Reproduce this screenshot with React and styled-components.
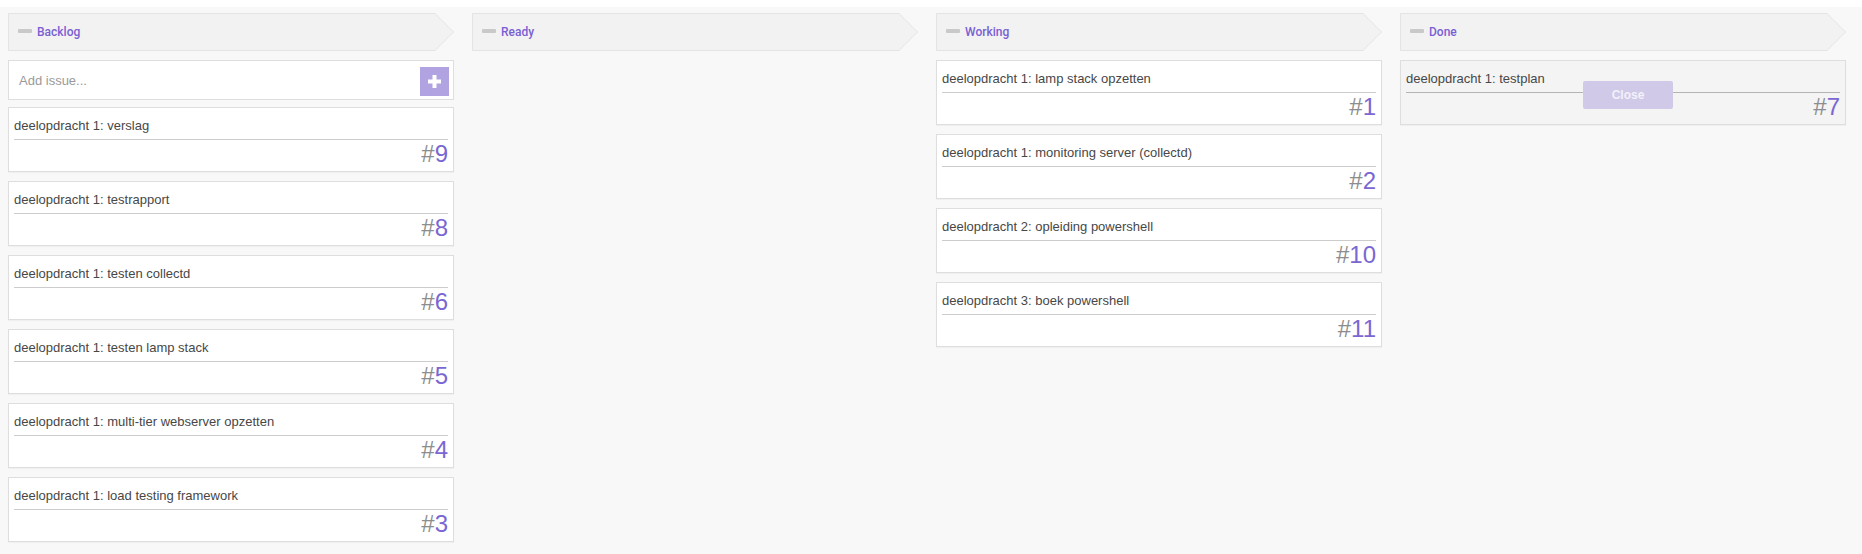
import React from "react";
import styled, { createGlobalStyle } from "styled-components";

const GlobalStyle = createGlobalStyle`
  html, body {
    margin: 0;
    padding: 0;
    background: #ffffff;
    font-family: "Liberation Sans", Arial, sans-serif;
  }
  * {
    box-sizing: border-box;
  }
`;

const Board = styled.div`
  margin-top: 7px;
  min-height: calc(100vh - 7px);
  background: #f8f8f8;
  padding: 6px 16px 12px 8px;
  display: grid;
  grid-template-columns: repeat(4, 1fr);
  column-gap: 18px;
  align-items: start;
`;

const Column = styled.div`
  display: flex;
  flex-direction: column;
`;

const Header = styled.div`
  position: relative;
  height: 38px;
  margin-bottom: 9px;
  display: flex;
  align-items: center;
  padding-left: 10px;

  &::before,
  &::after {
    content: "";
    position: absolute;
    z-index: 0;
  }
  &::before {
    inset: 0;
    background: #e4e4e4;
    clip-path: polygon(0 0, calc(100% - 19px) 0, 100% 50%, calc(100% - 19px) 100%, 0 100%);
  }
  &::after {
    inset: 1px 1px 1px 1px;
    background: #f2f2f2;
    clip-path: polygon(0 0, calc(100% - 18px) 0, 100% 50%, calc(100% - 18px) 100%, 0 100%);
  }
`;

const Dash = styled.span`
  position: relative;
  z-index: 1;
  width: 14px;
  height: 4px;
  margin-top: -3px;
  margin-right: 5px;
  background: #c9c9c9;
  border-radius: 1px;
`;

const HeaderTitle = styled.span`
  position: relative;
  z-index: 1;
  font-family: Roboto, "Liberation Sans", sans-serif;
  font-size: 12px;
  font-weight: 500;
  color: #7a5fd4;
`;

const AddBox = styled.div`
  height: 40px;
  margin-bottom: 7px;
  background: #ffffff;
  border: 1px solid #dedede;
  display: flex;
  align-items: flex-start;
`;

const AddInput = styled.input`
  flex: 1;
  height: 38px;
  border: none;
  outline: none;
  background: transparent;
  padding: 0 10px;
  font-family: "Liberation Sans", Arial, sans-serif;
  font-size: 13px;
  color: #444;
  &::placeholder {
    color: #9a9a9a;
  }
`;

const AddButton = styled.button`
  width: 29px;
  height: 29px;
  margin: 6px 4px 0 0;
  padding: 0;
  border: none;
  background: #b1a3e1;
  display: flex;
  align-items: center;
  justify-content: center;
  cursor: pointer;
`;

const CardList = styled.div`
  display: flex;
  flex-direction: column;
  gap: 9px;
`;

const Card = styled.div`
  position: relative;
  height: 65px;
  padding: 0 5px 3px;
  background: ${(p) => (p.$done ? "#f4f4f4" : "#ffffff")};
  border: 1px solid #dedede;
  box-shadow: 0 1px 1px rgba(0, 0, 0, 0.03);
`;

const CardTitle = styled.div`
  padding: 10px 0 5px;
  line-height: 16px;
  font-size: 13px;
  color: #474747;
  border-bottom: 1px solid ${(p) => (p.$done ? "#b4b4b4" : "#cccccc")};
  white-space: nowrap;
  overflow: hidden;
`;

const CardNumber = styled.div`
  text-align: right;
  font-size: 24px;
  line-height: 28px;
  color: #7a67d2;
`;

const Hash = styled.span`
  color: #8d8d8d;
`;

const CloseButton = styled.button`
  position: absolute;
  top: 20px;
  left: 50%;
  margin-left: -40px;
  width: 90px;
  height: 28px;
  border: none;
  border-radius: 2px;
  background: #d0c9e8;
  color: #f3f1fa;
  font-family: "Liberation Sans", Arial, sans-serif;
  font-size: 12px;
  font-weight: bold;
  cursor: pointer;
`;

const columns = [
  {
    title: "Backlog",
    add: true,
    issues: [
      { id: 9, title: "deelopdracht 1: verslag" },
      { id: 8, title: "deelopdracht 1: testrapport" },
      { id: 6, title: "deelopdracht 1: testen collectd" },
      { id: 5, title: "deelopdracht 1: testen lamp stack" },
      { id: 4, title: "deelopdracht 1: multi-tier webserver opzetten" },
      { id: 3, title: "deelopdracht 1: load testing framework" },
    ],
  },
  { title: "Ready", issues: [] },
  {
    title: "Working",
    issues: [
      { id: 1, title: "deelopdracht 1: lamp stack opzetten" },
      { id: 2, title: "deelopdracht 1: monitoring server (collectd)" },
      { id: 10, title: "deelopdracht 2: opleiding powershell" },
      { id: 11, title: "deelopdracht 3: boek powershell" },
    ],
  },
  {
    title: "Done",
    done: true,
    issues: [{ id: 7, title: "deelopdracht 1: testplan" }],
  },
];

function PlusIcon() {
  return (
    <svg width="13" height="13" viewBox="0 0 13 13">
      <rect x="4.5" y="0" width="4" height="13" fill="#ffffff" />
      <rect x="0" y="4.5" width="13" height="4" fill="#ffffff" />
    </svg>
  );
}

export default function App() {
  return (
    <>
      <GlobalStyle />
      <Board>
        {columns.map((col) => (
          <Column key={col.title}>
            <Header>
              <Dash />
              <HeaderTitle>{col.title}</HeaderTitle>
            </Header>
            {col.add && (
              <AddBox>
                <AddInput type="text" placeholder="Add issue..." />
                <AddButton>
                  <PlusIcon />
                </AddButton>
              </AddBox>
            )}
            <CardList>
              {col.issues.map((item) => (
                <Card key={item.id} $done={col.done}>
                  <CardTitle $done={col.done}>{item.title}</CardTitle>
                  <CardNumber>
                    <Hash>#</Hash>
                    {item.id}
                  </CardNumber>
                  {col.done && <CloseButton>Close</CloseButton>}
                </Card>
              ))}
            </CardList>
          </Column>
        ))}
      </Board>
    </>
  );
}
